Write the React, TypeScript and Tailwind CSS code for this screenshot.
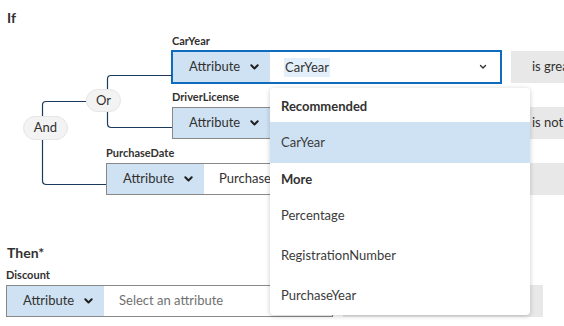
import React from "react";

const Chevron = ({ thin = false }: { thin?: boolean }) =>
  thin ? (
    <svg width="8" height="6" viewBox="0 0 8 6" className="shrink-0">
      <path d="M1.5 1.5 L4 4 L6.5 1.5" fill="none" stroke="#323130" strokeWidth="1.4" strokeLinecap="round" strokeLinejoin="round" />
    </svg>
  ) : (
    <svg width="9" height="6" viewBox="0 0 9 6" className="shrink-0">
      <path d="M1.3 1.3 L4.5 4.5 L7.7 1.3" fill="none" stroke="#1f1f1f" strokeWidth="2" strokeLinecap="round" strokeLinejoin="round" />
    </svg>
  );

type RowProps = {
  label: string;
  value?: React.ReactNode;
  op: string;
  focused?: boolean;
  width?: string;
  showChevron?: boolean;
};

const Row = ({ label, value, op, focused, width = "w-[329px]", showChevron }: RowProps) => (
  <div className="flex flex-col">
    <div className="text-[11px] font-bold leading-[15px] h-[15px] whitespace-nowrap">{label}</div>
    <div className="mt-[3px] flex items-center">
      <div
        className={
          "flex h-[32px] shrink-0 border bg-white " +
          width +
          (focused ? " border-[#0f6cbd] outline outline-1 outline-[#0f6cbd]" : " border-[#8a8886]")
        }
      >
        <div className="w-[97px] shrink-0 bg-[#cfe2f3] flex items-center justify-between pl-[16px] pr-[11px] text-[13px]">
          <span>Attribute</span>
          <Chevron />
        </div>
        <div className="flex-1 flex items-center justify-between pl-[15px] pr-[13px] text-[13px] whitespace-nowrap overflow-hidden">
          {value}
          {showChevron && <Chevron thin />}
        </div>
      </div>
      <div className="ml-[10px] h-[32px] w-[200px] shrink-0 bg-[#e8e8e8] flex items-center pl-[21px] text-[13px] whitespace-nowrap">
        {op}
      </div>
    </div>
  </div>
);

export default function App() {
  return (
    <div
      className="relative w-[564px] h-[326px] overflow-hidden bg-white text-[#323130]"
      style={{ fontFamily: "Lato, 'Noto Sans', sans-serif" }}
    >
      <div className="pl-[6px] pt-[8px]">
        <div className="text-[14px] font-bold leading-[20px] pl-[1px]">If</div>
        <div className="mt-[5px] pl-[100px] flex flex-col gap-[6px]">
          <div className="pl-[66px] flex flex-col gap-[6px]">
            <Row
              label="CarYear"
              focused
              showChevron
              op="is greater than"
              value={<span className="bg-[#e3effa] px-[1px] -ml-[1px] leading-[19px]">CarYear</span>}
            />
            <Row label="DriverLicense" op="is not equal to" value={<span>License</span>} />
          </div>
          <Row label="PurchaseDate" op="is after" value={<span>PurchaseDate</span>} />
        </div>
        <div className="mt-[48px] text-[14px] font-bold leading-[20px] pl-[1px]">Then*</div>
        <div className="mt-[4px]">
          <Row
            label="Discount"
            op="="
            width="w-[327px]"
            value={<span className="text-[#707070]">Select an attribute</span>}
          />
        </div>
      </div>

      <svg className="absolute left-0 top-0 pointer-events-none" width="564" height="326">
        <g fill="none" stroke="#1c3a5e" strokeWidth="1.2">
          <path d="M107.5 90 V79 Q107.5 75.5 111 75.5 H172" />
          <path d="M107.5 112 V123.5 Q107.5 127.5 111.5 127.5 H172" />
          <path d="M86 101.5 H46 Q42.5 101.5 42.5 105 V117" />
          <path d="M42.5 139 V180.5 Q42.5 184.5 46.5 184.5 H106" />
        </g>
      </svg>

      <div className="absolute left-[86px] top-[89px] w-[35px] h-[23px] rounded-full bg-[#f3f3f3] border border-[#e6e6e6] flex items-center justify-center text-[13px]">
        Or
      </div>
      <div className="absolute left-[23px] top-[116px] w-[45px] h-[24px] rounded-full bg-[#f3f3f3] border border-[#e6e6e6] flex items-center justify-center text-[13px]">
        And
      </div>

      <div className="absolute left-[270px] top-[88px] w-[260px] h-[227px] bg-white rounded-[4px] shadow-[0_1px_5px_rgba(0,0,0,0.22)] pt-[3px] text-[13px] text-[#3b3b3b]">
        <div className="h-[32px] flex items-center px-[11px] font-bold text-[#323130]">Recommended</div>
        <div className="h-[40px] flex items-center px-[11px] bg-[#cfe2f3] -mt-[1px] pt-[1px] h-[41px]">CarYear</div>
        <div className="h-[32px] flex items-center px-[11px] font-bold text-[#323130] pt-[1px]">More</div>
        <div className="h-[40px] flex items-center px-[11px] pt-[1px]">Percentage</div>
        <div className="h-[40px] flex items-center px-[11px] pt-[1px]">RegistrationNumber</div>
        <div className="h-[40px] flex items-center px-[11px] pt-[1px]">PurchaseYear</div>
      </div>
    </div>
  );
}
